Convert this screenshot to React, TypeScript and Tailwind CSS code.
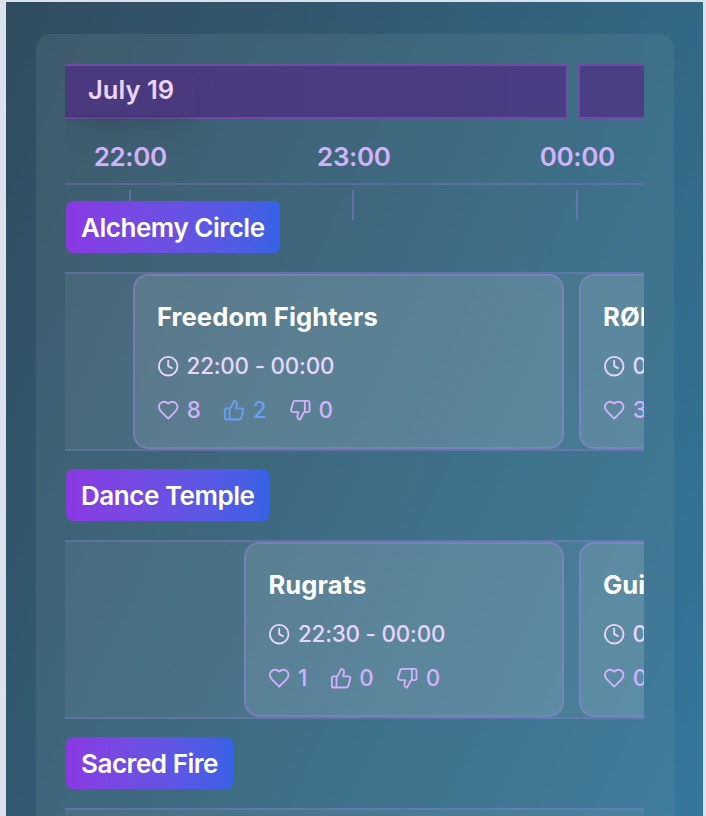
import type { ReactNode } from 'react';

function Icon({ children }: { children: ReactNode }) {
  return (
    <svg viewBox="0 0 24 24" fill="none" stroke="currentColor" strokeWidth="2" strokeLinecap="round" strokeLinejoin="round" className="size-[22.4px] shrink-0">
      {children}
    </svg>
  );
}

const Clock = () => (
  <Icon>
    <circle cx="12" cy="12" r="10" />
    <path d="M12 6v6l4 2" />
  </Icon>
);
const Heart = () => (
  <Icon>
    <path d="M19 14c1.49-1.46 3-3.21 3-5.5A5.5 5.5 0 0 0 16.5 3c-1.76 0-3 .5-4.5 2-1.5-1.5-2.74-2-4.5-2A5.5 5.5 0 0 0 2 8.5c0 2.3 1.5 4.05 3 5.5l7 7Z" />
  </Icon>
);
const ThumbsUp = () => (
  <Icon>
    <path d="M7 10v12" />
    <path d="M15 5.88 14 10h5.83a2 2 0 0 1 1.92 2.56l-2.33 8A2 2 0 0 1 17.5 22H4a2 2 0 0 1-2-2v-8a2 2 0 0 1 2-2h2.76a2 2 0 0 0 1.79-1.11L12 2a3.13 3.13 0 0 1 3 3.88Z" />
  </Icon>
);
const ThumbsDown = () => (
  <Icon>
    <path d="M17 14V2" />
    <path d="M9 18.12 10 14H4.17a2 2 0 0 1-1.92-2.56l2.33-8A2 2 0 0 1 6.5 2H20a2 2 0 0 1 2 2v8a2 2 0 0 1-2 2h-2.76a2 2 0 0 0-1.79 1.11L12 22a3.13 3.13 0 0 1-3-3.88Z" />
  </Icon>
);

interface Show {
  name: string;
  time: string;
  loves: number;
  likes: number;
  dislikes: number;
  liked?: boolean;
  width: string;
}

function ShowCard({ show }: { show: Show }) {
  return (
    <article className={`${show.width} h-[175px] shrink-0 whitespace-nowrap rounded-[15px] border-2 border-[#9d7fe0]/45 bg-[#d0dce4]/14 pl-[22px] pt-[24px]`}>
      <h3 className="h-[34px] text-[25.6px] font-bold leading-[34px] tracking-[0.1px] text-white">{show.name}</h3>
      <div className="mt-[17px] flex h-[30px] items-center gap-[7.2px] text-[22.4px] font-medium tracking-[-0.2px] text-[#e9d5ff]">
        <Clock />
        <span>{show.time}</span>
      </div>
      <div className="mt-[14px] flex h-[30px] items-center gap-[22.5px] text-[22.4px] font-medium tracking-[-0.2px] text-[#d3b1fb]">
        <span className="flex items-center gap-[7.3px]"><Heart />{show.loves}</span>
        <span className={show.liked ? 'flex items-center gap-[7.3px] text-[#669ff5]' : 'flex items-center gap-[7.3px]'}><ThumbsUp />{show.likes}</span>
        <span className="flex items-center gap-[7.3px]"><ThumbsDown />{show.dislikes}</span>
      </div>
    </article>
  );
}

function Stage({ name, offset, shows }: { name: string; offset: string; shows: Show[] }) {
  return (
    <section className="mb-[18px] h-[250px]">
      <h2 className="relative ml-[1px] h-[52px] w-fit rounded-[7px] bg-linear-to-r from-[#8a38e2] to-[#3662e5] pl-[15px] pr-[15px] text-[26px] font-[560] leading-[54px] tracking-[-0.46px] whitespace-nowrap text-white">{name}</h2>
      <div className={`${offset} mt-[19px] flex h-[179px] gap-[15px] overflow-hidden border-y-2 border-[#957fe0]/30 bg-white/5`}>
        {shows.map((s) => <ShowCard key={s.name} show={s} />)}
      </div>
    </section>
  );
}

const hours = ['22:00', '23:00', '00:00'];

export default function App() {
  return (
    <div className="h-[816px] w-[706px] overflow-hidden bg-[#dce2ed] pl-[6px] pr-[3px] pt-[2px] font-['Inter','Liberation_Sans',sans-serif]">
      <main className="h-[814px] overflow-hidden bg-[linear-gradient(115deg,#314c5f_0%,#31586f_30%,#336a88_70%,#35779c_100%)] pl-[30px] pr-[29px] pt-[32px]">
        <div className="h-[868px] rounded-t-[15px] bg-[#85a0a8]/16 pl-[29px] pr-[30px] pt-[30px]">
          <div className="overflow-hidden">
            <div className="flex h-[88px] gap-[10px]">
              <div className="h-[55px] w-[503px] shrink-0 border-2 border-l-0 border-[#6b4da6] bg-linear-to-r from-[#4b387b] to-[#4a3d83]">
                <div className="h-[50px] w-[131px] rounded-[8px] bg-[#4b397d] pl-[23px] text-[25.6px] font-[560] leading-[48px] text-[#e9d5ff] shadow-[0_20px_30px_-6px_rgba(0,0,0,0.1),0_8px_12px_-8px_rgba(0,0,0,0.1)]">July 19</div>
              </div>
              <div className="h-[55px] w-[80px] shrink-0 border-2 border-[#6b4da6] bg-[#4b3f84]" />
            </div>
            <div className="-ml-[46.5px] -mt-[16px] flex h-[49px] border-b-2 border-[#957fe0]/30">
              {hours.map((h) => <div key={h} className="w-[223.5px] shrink-0 text-center text-[26px] font-[560] leading-[42px] tracking-[-0.4px] text-[#d3b1fb]">{h}</div>)}
            </div>
            <div className="mt-[5px] flex h-[30px] gap-[221.4px] pl-[64px]">
              {hours.map((h) => <div key={h} className="w-[2px] shrink-0 bg-[#957fdc]/45" />)}
            </div>
            <div className="-mt-[19px]">
              <Stage name="Alchemy Circle" offset="pl-[68px]" shows={[
                { name: 'Freedom Fighters', time: '22:00 - 00:00', loves: 8, likes: 2, dislikes: 0, liked: true, width: 'w-[431px]' },
                { name: 'RØE', time: '00:00 - 02:00', loves: 3, likes: 0, dislikes: 0, width: 'w-[431px]' },
              ]} />
              <Stage name="Dance Temple" offset="pl-[179.4px]" shows={[
                { name: 'Rugrats', time: '22:30 - 00:00', loves: 1, likes: 0, dislikes: 0, width: 'w-[319.6px]' },
                { name: 'Guillaume', time: '00:00 - 01:30', loves: 0, likes: 0, dislikes: 0, width: 'w-[431px]' },
              ]} />
              <Stage name="Sacred Fire" offset="pl-[68px]" shows={[]} />
            </div>
          </div>
        </div>
      </main>
    </div>
  );
}
